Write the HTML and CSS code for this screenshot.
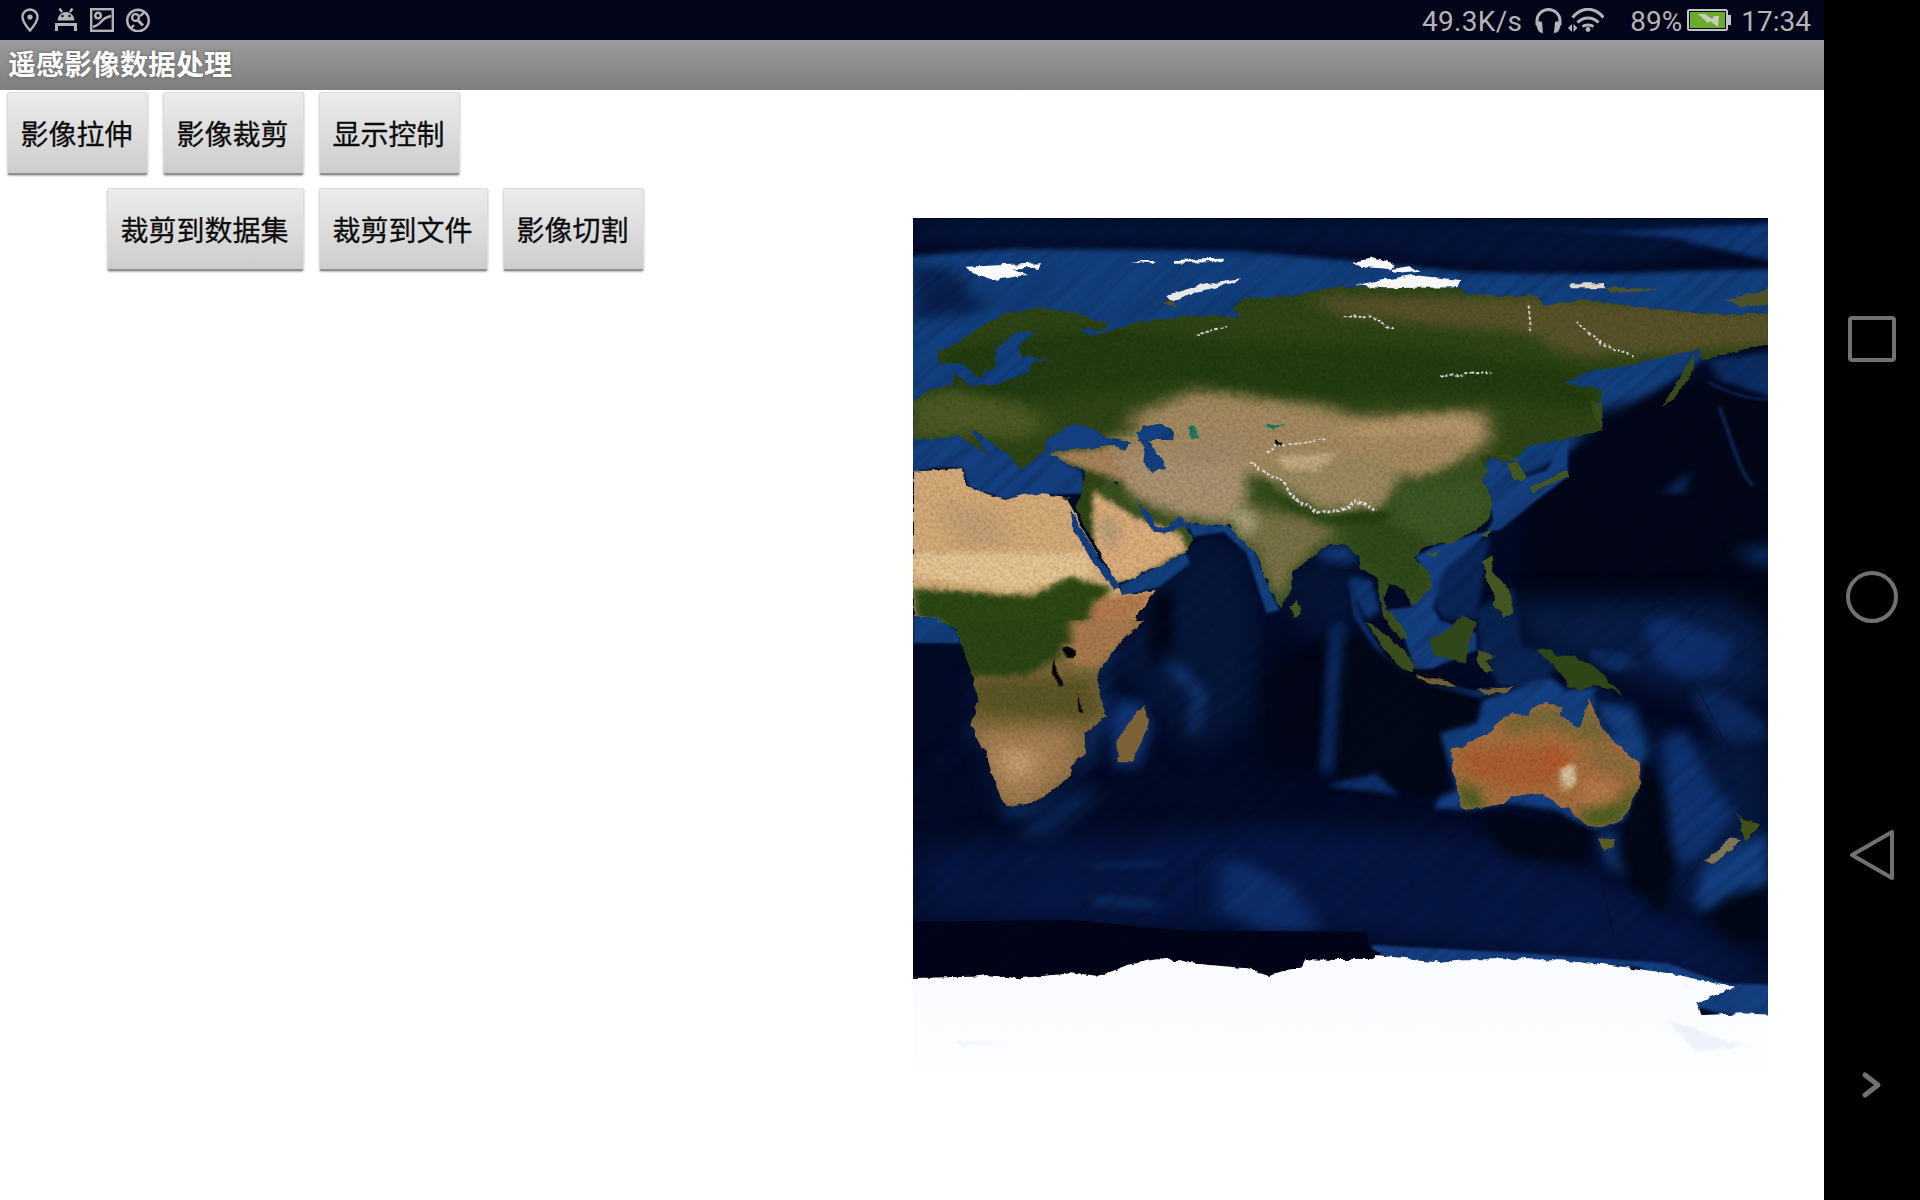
FILE: index.html
```html
<!DOCTYPE html>
<html lang="zh">
<head>
<meta charset="utf-8">
<title>遥感影像数据处理</title>
<link rel="stylesheet" href="styles.css">
</head>
<body>
<div class="screen">
  <div class="main">
    <header class="status">
      <div class="status-left">
        <svg class="ic" viewBox="0 0 24 24"><path class="ln" d="M12 1.500a7.500 7.500 0 0 0-7.500 7.500c0 5 7.500 13.500 7.500 13.500s7.500-8.500 7.500-13.500a7.500 7.500 0 0 0-7.500-7.500z"/><circle class="fl" cx="12" cy="9" r="2.600"/></svg>
        <svg class="ic" viewBox="0 0 24 24"><path class="fl" d="M3.500 12.500a8.500 8.500 0 0 1 17 0z"/><path class="ln" d="M5.500 0.500l2.500 3.500M18.500 0.500l-2.500 3.500"/><circle class="dk" cx="8.500" cy="8" r="1.200"/><circle class="dk" cx="15.500" cy="8" r="1.200"/><path class="fl" d="M1 15h22v8h-3v-5h-16v5h-3z"/></svg>
        <svg class="ic" viewBox="0 0 24 24"><rect class="ln" x="1.200" y="1.200" width="21.600" height="21.600"/><circle class="ln" cx="8" cy="7.500" r="2.800"/><path class="ln" d="M3 19c3-1 5-2 7-4 3-4 6-6 11-7"/></svg>
        <svg class="ic" viewBox="0 0 24 24"><circle class="ln" cx="12" cy="12.500" r="10.800"/><circle class="ln" cx="9.500" cy="9.500" r="3.400"/><path class="ln ln3" d="M12 12.500l5 5"/><path class="ln" d="M5 20l3-3M14 8l5-4"/></svg>
      </div>
      <div class="status-right">
        <span class="st speed">49.3K/s</span>
        <svg class="hp" viewBox="0 0 27 25"><path class="ln ln3" d="M2 17V12.500a11.500 11 0 0 1 23 0v4.500"/><path class="fl" d="M1 15q3-3 6-1l1 11q-6 0-7-10zM26 15q-3-3-6-1l-1 11q6 0 7-10z"/></svg>
        <svg class="wf" viewBox="0 0 36 24"><path class="ln ln3" d="M4.500 9.500c9-11 22-11 31 0M9.500 14.500c6-6 15-6 21 0M14.500 18.500c3-2 8-2 11 0"/><circle class="fl" cx="20" cy="21.500" r="2.400"/><path class="fl" d="M4 16v8l-4-4zM5.500 16v8l4-4z"/></svg>
        <span class="st pct">89%</span>
        <svg class="bt" viewBox="0 0 44 22"><rect class="bt-o" x="1" y="1" width="39" height="20" rx="1.500"/><rect class="bt-f" x="3" y="3" width="35" height="16"/><path class="bt-b" d="M11 5h7l7 5 2-3h5l-1 11-8-6-2 2z"/><rect class="bt-n" x="41" y="6" width="3" height="10"/></svg>
        <span class="st time">17:34</span>
      </div>
    </header>
    <div class="titlebar">遥感影像数据处理</div>
    <div class="content">
      <div class="buttons">
        <div class="row">
          <button class="btn">影像拉伸</button>
          <button class="btn">影像裁剪</button>
          <button class="btn">显示控制</button>
        </div>
        <div class="row row-sub">
          <button class="btn btn-six">裁剪到数据集</button>
          <button class="btn btn-five">裁剪到文件</button>
          <button class="btn">影像切割</button>
        </div>
      </div>
      <svg class="map" viewBox="913 218 855 855">
        <defs>
          <filter id="b3" x="-10%" y="-10%" width="120%" height="120%"><feGaussianBlur stdDeviation="3"/></filter>
          <filter id="b8" x="-20%" y="-20%" width="140%" height="140%"><feGaussianBlur stdDeviation="8"/></filter>
          <filter id="b16" x="-30%" y="-30%" width="160%" height="160%"><feGaussianBlur stdDeviation="18"/></filter>
          <filter id="b30" x="-40%" y="-40%" width="180%" height="180%"><feGaussianBlur stdDeviation="36"/></filter>
          <filter id="noise" x="0" y="0" width="100%" height="100%"><feTurbulence type="fractalNoise" baseFrequency="0.3" numOctaves="2" seed="7"/><feColorMatrix values="0 0 0 0 0  0 0 0 0 0  0 0 0 0 0  1.800 0 0 0 -0.650"/></filter>
          <filter id="streak" x="0" y="0" width="100%" height="100%"><feTurbulence type="fractalNoise" baseFrequency="0.008 0.14" numOctaves="3" seed="11"/><feColorMatrix values="0 0 0 0 0  0 0 0 0 0  0 0 0 0 0  2.200 0 0 0 -0.850"/></filter>
          <filter id="rough" x="-2%" y="-2%" width="104%" height="104%"><feTurbulence type="fractalNoise" baseFrequency="0.09" numOctaves="3" seed="3" result="t"/><feDisplacementMap in="SourceGraphic" in2="t" scale="6" xChannelSelector="R" yChannelSelector="G"/></filter>
          <linearGradient id="ice" x1="0" y1="0" x2="0" y2="1"><stop offset="0" stop-color="#f9fbfe"/><stop offset="0.7" stop-color="#fcfdff"/><stop offset="1" stop-color="#ffffff"/></linearGradient>
          <clipPath id="clipEA"><use href="#eurasia"/><use href="#southasia"/><use href="#africaN"/></clipPath>
          <clipPath id="clipLand"><use href="#eurasia"/><use href="#southasia"/><use href="#africaN"/><use href="#africaS"/><use href="#australia"/></clipPath>
          <clipPath id="clipAf"><use href="#africaS"/></clipPath>
          <clipPath id="clipAu"><use href="#australia"/></clipPath>
          <clipPath id="frame"><rect x="913" y="218" width="855" height="855"/></clipPath>
          <path id="eurasia" transform="translate(900 200) scale(0.5688 0.3333)" d="M23 600L50 570 95 555 95 520 125 560 170 555 225 515 230 490 270 478 215 470 205 440 240 395 205 395 170 450 165 500 140 535 110 490 70 490 65 455 100 430 150 370 190 340 250 322 320 345 365 375 355 392 310 385 340 408 385 385 420 365 520 345 570 350 600 355 585 320 610 290 640 295 700 285 760 262 900 260 985 265 1000 285 1120 290 1130 315 1200 300 1300 320 1400 340 1547 345 1547 430 1480 450 1410 480 1405 450 1340 470 1300 490 1200 520 1170 550 1235 570 1230 600 1220 640 1235 690 1170 720 1110 735 1080 780 1060 790 1040 770 1030 800 950 900 750 950 500 950 400 1000 388 1150 345 1040 310 930 325 815 260 760 320 745 370 735 420 760 435 800 470 815 490 800 475 760 480 700 460 670 425 680 415 730 370 715 340 690 300 672 260 720 250 760 210 810 190 760 130 690 125 700 160 770 100 705 60 720 23 710z"/>
          <path id="southasia" transform="translate(1100 420) scale(0.3333)" d="M1250 130L1225 105 1165 100 1135 120 1170 155 1145 180 1180 235 1165 300 1130 330 1060 365 1000 375 965 385 945 410 985 460 995 500 935 555 915 510 870 490 850 530 860 570 915 650 905 660 850 590 830 470 780 450 775 410 745 375 680 375 630 415 580 455 570 520 540 560 510 510 480 430 465 390 415 355 385 315 320 315 260 310 240 295 280 360 255 395 200 430 120 465 55 495 25 440 0 395 0 200 100 60 600 60 1100 60z"/>
          <path id="africaN" transform="translate(900 200) scale(0.5688 0.3333)" d="M23 815L105 805 120 860 185 900 230 880 290 890 305 935 345 1060 385 1160 390 1185 450 1170 410 1260 385 1330 105 1330 105 1290 70 1250 23 1245z"/>
          <path id="africaS" transform="translate(900 620) scale(0.5688 0.3333)" d="M65 0L100 30 110 90 125 150 138 240 125 320 150 400 180 550 190 562 240 545 300 470 300 440 325 400 325 340 362 290 345 170 375 90 430 0z"/>
          <path id="australia" transform="translate(1300 600) scale(0.3333)" d="M455 450L520 425 575 395 585 375 630 340 680 345 700 320 740 305 785 320 775 345 820 375 840 390 855 340 865 295 885 330 905 385 950 430 1015 490 1022 545 1000 590 970 660 905 685 870 680 825 650 810 620 780 625 750 590 700 580 640 590 590 615 530 625 490 630 480 605 470 550 455 490z"/>
        </defs>
        <g clip-path="url(#frame)">
          <rect x="913" y="218" width="855" height="855" fill="#030a26"/>

          <!-- northern ocean -->
          <g transform="translate(900 200) scale(0.5688 0.3333)">
            <path filter="url(#b8)" fill="#123f7e" d="M0 170L200 145 600 150 1000 215 1250 220 1560 205 1560 400 1420 470 1290 620 1240 700 1130 800 1060 860 900 800 300 800 0 800z"/>
            <path filter="url(#b16)" fill="#041338" d="M23 54H1547V100L1300 190 1100 210 800 160 400 130 23 130z"/>
            <path filter="url(#b8)" fill="#0f3877" d="M1000 75L1250 95 1547 70 1547 190 1350 110z"/>
            <path filter="url(#b16)" fill="#08204e" d="M23 200L90 200 150 330 30 360 23 360z"/>
            <path filter="url(#b16)" fill="#020618" d="M1220 640L1420 540 1560 600 1560 1330 1070 1330 1100 900 1170 800z"/>
            <path filter="url(#b8)" fill="#0c2e66" d="M1420 480L1547 450 1547 600 1440 540z"/>
            <path filter="url(#b3)" fill="none" stroke="#0e2c5e" stroke-width="6" d="M1420 545C1470 590 1500 600 1547 600M1440 620C1460 700 1470 800 1500 860"/>
            <path filter="url(#b16)" fill="#0a2656" d="M1470 1050L1547 1020 1547 1110 1490 1090z"/>
            <path filter="url(#b8)" fill="#0a2656" d="M1340 880L1390 810 1380 880z"/>
            <path filter="url(#b3)" fill="#143f80" d="M130 690L190 760 250 770 320 810 325 880 260 885 190 900 120 860 110 800 60 800 23 820 23 740 70 700z"/>
            <path filter="url(#b3)" fill="#12407f" d="M23 1245L75 1250 105 1300 105 1330 23 1330z"/>
          </g>

          <!-- southern and western ocean -->
          <g transform="translate(900 620) scale(0.5688 0.3333)">
            <path filter="url(#b30)" fill="#07194a" opacity="0.8" d="M23 680L650 620 1000 640 1250 760 1400 900 1547 1090 1547 1130 1100 1010 800 950 23 900z"/>
            <path filter="url(#b16)" fill="#0e2f6c" d="M560 730L600 720 690 800 740 930 640 930 560 870z"/>
            <path filter="url(#b8)" fill="#0a2656" d="M340 820L460 840 450 870 340 860z M340 730L460 720 460 740 340 745z"/>
            <path filter="url(#b16)" fill="#081f4a" d="M30 520L110 350 130 330 70 420 40 520z"/>
            <path filter="url(#b16)" fill="#10346e" d="M120 150L140 240 125 330 150 420 185 590 240 590 330 430 370 290 360 170 390 90 350 90 330 300 300 470 230 560 190 560 150 400z"/>
            <path filter="url(#b16)" fill="#0a2656" d="M205 640L280 550 340 480 330 560 250 660z"/>
            <path filter="url(#b3)" fill="#143f80" d="M830 975L1100 1000 1350 1030 1450 1090 1547 1095 1547 1195 1440 1180 1400 1160 1300 1040 1100 1030 830 1030z"/>
          </g>

          <!-- Indian Ocean and South East Asia -->
          <g transform="translate(1100 420) scale(0.3333)">
            <path filter="url(#b30)" fill="#06173a" d="M170 520L280 340 430 380 480 620 470 880 300 1000 150 850 20 700z"/>
            <path filter="url(#b16)" fill="#020618" d="M160 520L220 510 220 680 140 740z"/>
            <path filter="url(#b30)" fill="#020618" d="M490 720L700 640 820 720 950 800 1150 830 1120 920 1040 1050 480 1050z"/>
            <path filter="url(#b30)" fill="#061538" d="M560 420L760 420 780 600 700 640 560 620z"/>
            <path filter="url(#b16)" fill="#11336e" d="M190 740L240 730 320 820 300 920 260 950 280 830z"/>
            <path filter="url(#b16)" fill="#0f3070" d="M700 620L735 620 710 900 695 1050 665 1050 685 880z"/>
            <path filter="url(#b16)" fill="#133f80" d="M640 400L680 375 745 375 780 410 750 430 680 420z"/>
            <path filter="url(#b3)" fill="#133f80" d="M260 310L385 315 465 390 510 510 540 570 500 580 440 400 370 335 280 350z"/>
            <path filter="url(#b3)" fill="#12407e" d="M60 495L255 395 270 430 180 500 60 530z"/>
            <path filter="url(#b3)" fill="#133f80" d="M120 255L160 290 190 330 240 295 275 320 240 340 160 340z"/>
            <path filter="url(#b16)" fill="#0e3272" d="M30 880L60 830 130 850 160 920 120 1040 40 1040z"/>
            <path filter="url(#b3)" fill="#143f80" d="M1130 110L1180 100 1250 130 1280 170 1340 150 1404 40 1404 170 1310 240 1200 330 1130 340 1000 380 945 410 985 470 935 560 860 570 915 660 945 750 1000 745 1130 690 1130 640 1020 600 1000 560 1070 450 1150 350 1180 300z"/>
            <path filter="url(#b8)" fill="#0a2658" d="M1000 560L1030 450 1140 360 1170 345 1130 600 1040 600z"/>
            <path filter="url(#b8)" fill="#0f3470" d="M745 480L770 470 815 480 840 570 800 600 755 520z"/>
            <path filter="url(#b3)" fill="#0d2c62" d="M745 480L790 600 860 710 945 770 1120 810 1200 800 1140 835 950 795 830 695 760 590z"/>
            <path filter="url(#b8)" fill="#0a2452" d="M1130 570L1240 500 1270 680 1404 700 1320 800 1200 800 1140 700z"/>
          </g>
          <g transform="translate(1300 600) scale(0.3333)">
            <path filter="url(#b30)" fill="#081c45" d="M620 0L1300 0 1404 100 1404 300 1200 300 900 200 700 150z"/>
            <path filter="url(#b16)" fill="#0e2e6a" d="M1030 70L1100 50 1300 120 1280 210 1170 240 1070 190z"/>
            <path filter="url(#b16)" fill="#0c2a5e" d="M1180 270L1260 270 1404 370 1404 420 1290 450 1200 340z"/>
            <path filter="url(#b8)" fill="#0c2a5e" d="M870 150L950 150 1020 190 960 220 880 190z"/>
            <path filter="url(#b30)" fill="#071a42" d="M880 400L1404 440 1404 900 1100 900 960 560z"/>
            <path filter="url(#b16)" fill="#020817" d="M960 470L1050 480 1160 700 1090 950 930 800 970 700z"/>
            <path filter="url(#b16)" fill="#020817" d="M1200 930L1404 850 1404 1020 1300 1030z"/>
            <path filter="url(#b16)" fill="#020817" d="M530 650L880 650 860 800 620 770z"/>
            <path filter="url(#b16)" fill="#020817" d="M100 90L520 300 540 370 420 470 440 600 320 570 110 550z"/>
            <path filter="url(#b8)" fill="#0e2f68" d="M90 560L270 580 300 590 230 520 100 550z"/>
            <path filter="url(#b16)" fill="#0f3270" d="M95 90L130 60 90 530 75 520z"/>
            <path filter="url(#b16)" fill="#0f3372" d="M1090 420L1150 390 1230 540 1310 640 1200 770 1130 790 1110 700 1100 560z"/>
            <path filter="url(#b16)" fill="#133f80" d="M1180 920L1210 800 1300 740 1404 700 1404 850 1290 880 1220 930z"/>
            <path filter="url(#b8)" fill="#133f80" d="M550 300L750 230 800 270 880 260 950 290 885 270 885 340 920 400 1030 430 1020 540 975 660 890 690 820 660 770 630 620 610 520 630 400 625 420 590 470 570 440 470 420 400 530 370z"/>
            <path filter="url(#b16)" fill="#133f80" d="M885 300L1000 320 1030 400 1040 470 1020 490 950 420 900 360z"/>
            <path filter="url(#b16)" fill="#103570" d="M890 690L950 690 950 760 985 830 920 800z"/>
            <path fill="none" stroke="#030c28" stroke-width="3" opacity="0.7" d="M900 830L940 1000M1085 960C1110 900 1160 850 1200 780M1180 250C1220 300 1270 440 1300 455"/>
          </g>
          <g transform="translate(900 620) scale(0.5688 0.3333)">
            <path fill="#020519" d="M23 905L300 900 500 932 820 935 826 985 846 1000 830 1025 650 1070 400 1050 345 1075 23 1080z"/>
          </g>

          <g transform="rotate(-40 1340 645)"><rect x="700" y="0" width="1300" height="1300" filter="url(#streak)" opacity="0.16"/></g>

          <!-- land -->
          <g filter="url(#rough)">
            <use href="#eurasia" fill="#2e4515"/>
            <use href="#southasia" fill="#3a5020"/>
            <use href="#africaN" fill="#d5ac79"/>
            <use href="#africaS" fill="#7f6a3a"/>
            <use href="#australia" fill="#a66e3e"/>

            <g clip-path="url(#clipEA)">
              <g transform="translate(900 200) scale(0.5688 0.3333)">
                <path filter="url(#b16)" fill="#59532a" d="M720 290L1120 290 1547 340 1547 430 1340 460 1180 470 1100 400 900 370 760 340z"/>
                <path filter="url(#b16)" fill="#233c10" d="M70 450L360 380 600 430 900 440 1200 510 1240 640 1050 590 750 590 500 540 230 600 100 600z"/>
                <path filter="url(#b16)" fill="#4d5a25" d="M23 600L100 570 230 620 260 690 200 720 100 700 23 720z"/>
                <path filter="url(#b16)" fill="#a48a60" d="M400 650L520 570 750 620 800 650 1030 630 1040 720 960 800 880 830 640 830 560 800 430 800 330 740 420 690z"/>
                <path filter="url(#b16)" fill="#bb9c70" d="M760 690L1000 650 1020 700 940 780 880 770 820 730z"/>
                <path filter="url(#b8)" fill="#a8835a" d="M255 760L400 740 440 800 470 890 420 880 400 850 330 810z"/>
                <path filter="url(#b16)" fill="#c4a076" d="M60 900L170 930 200 1040 100 1040z"/>
                <path filter="url(#b8)" fill="#e4c594" d="M23 1060L330 1060 340 1130 200 1170 23 1130z"/>
                <path filter="url(#b8)" fill="#2c4813" d="M23 1165L230 1190 300 1130 370 1160 330 1340 23 1340z"/>
                <path filter="url(#b8)" fill="#b47b4f" d="M340 1200L450 1170 390 1330 320 1330z"/>
              </g>
              <g transform="translate(1100 420) scale(0.3333)">
                <path filter="url(#b16)" fill="#ab9270" d="M40 100L440 100 440 250 380 310 240 290 100 230z"/>
                <path filter="url(#b16)" fill="#9c8960" d="M460 130L860 110 900 190 830 270 660 270 510 180z"/>
                <path filter="url(#b8)" fill="#c2a980" d="M530 110L720 95 650 150 550 150z"/>
                <path filter="url(#b16)" fill="#a58a60" d="M720 60L1100 30 1050 110 950 170 860 120 740 100z"/>
                <path filter="url(#b16)" fill="#a08a68" d="M200 60L450 50 440 120 240 130z"/>
                <path filter="url(#b8)" fill="#26400f" d="M480 180L540 230 620 270 700 295 800 270 880 280 840 320 700 310 600 290 500 210z"/>
                <path filter="url(#b16)" fill="#7a7246" d="M420 260L600 290 720 340 660 370 580 450 540 540 500 480 470 390 410 350z"/>
                <path filter="url(#b16)" fill="#a8a078" d="M380 270L450 260 480 320 420 350z"/>
                <path filter="url(#b16)" fill="#2f4a18" d="M740 330L880 300 1000 360 970 390 950 410 990 480 930 550 880 480 850 530 820 440 760 400z"/>
                <path filter="url(#b16)" fill="#3c5824" d="M900 200L1140 180 1170 290 1000 370 880 300z"/>
                <path filter="url(#b8)" fill="#dcae7c" d="M-20 210L100 290 240 340 260 390 100 480 50 490 -20 395z"/>
                <path filter="url(#b16)" fill="#b39a78" d="M-10 290L50 300 60 360 20 390z"/>
              </g>
            </g>
            <g clip-path="url(#clipAf)">
              <g transform="translate(900 620) scale(0.5688 0.3333)">
                <path filter="url(#b8)" fill="#2b4613" d="M60 0L310 0 280 110 220 170 120 170z"/>
                <path filter="url(#b8)" fill="#a97a50" d="M300 0L430 0 350 140 300 140z"/>
                <path filter="url(#b16)" fill="#5c5626" d="M120 180L340 170 360 300 120 280z"/>
                <path filter="url(#b16)" fill="#a77f55" d="M130 330L300 330 310 440 220 560 170 540z"/>
                <path filter="url(#b16)" fill="#caa074" d="M170 390L240 390 230 470 190 480z"/>
                <path fill="#030503" d="M290 80L310 88 305 118 292 112zM270 120L285 200 278 200 265 140zM312 215L322 280 314 275z"/>
              </g>
            </g>
            <g clip-path="url(#clipAu)">
              <g transform="translate(1300 600) scale(0.3333)">
                <path filter="url(#b16)" fill="#7a6a38" d="M600 350L780 310 900 340 950 430 850 420 760 380 620 400z"/>
                <path filter="url(#b16)" fill="#ab5f30" d="M470 450L780 440 760 560 620 560 500 520z"/>
                <path filter="url(#b16)" fill="#b4562a" d="M740 460L810 460 800 510 750 520z"/>
                <path filter="url(#b8)" fill="#d9c29c" d="M780 510L820 490 830 550 790 570z"/>
                <path filter="url(#b16)" fill="#8a6d3e" d="M860 420L1015 490 1000 540 880 500z"/>
                <path filter="url(#b16)" fill="#b67a4d" d="M850 540L950 540 920 620 840 610z"/>
                <path filter="url(#b16)" fill="#4e6022" d="M470 540L540 570 560 620 490 640z"/>
                <path filter="url(#b16)" fill="#4a5e20" d="M820 640L960 610 1020 530 1020 570 970 670 880 690z"/>
              </g>
            </g>
            <g transform="translate(1300 600) scale(0.3333)">
              <path fill="#5a5a28" d="M893 712L945 715 940 745 910 752z"/>
              <path fill="#7c7452" d="M1212 785L1250 750 1290 715 1320 720 1290 755 1240 795z"/>
              <path fill="#3f5018" d="M1305 630L1330 660 1380 672 1350 710 1335 720 1320 690 1330 670z"/>
              <path fill="#2e4616" d="M705 150L745 145 770 170 820 165 880 200 920 235 970 285 930 265 880 255 845 270 800 260 795 240 760 195 735 175z"/>
              <path fill="#30471a" d="M390 118L440 90 490 45 530 65 515 120 495 190 450 180 400 160z"/>
              <path fill="#3a4c1c" d="M195 65L250 95 310 150 345 200 340 220 300 200 240 130z"/>
              <path fill="#3c4e1c" d="M240 0L270 40 310 85 320 120 280 95 250 40z"/>
              <path fill="#6c6030" d="M345 225L400 235 450 245 470 258 420 255 350 238zM530 270L620 262 600 280 560 280zM590 275L650 255 600 285z"/>
              <path fill="#445420" d="M535 150L585 170 560 180 580 215 550 220 535 190zM590 0L640 0 630 50 580 20z"/>
            </g>
            <g transform="translate(1100 420) scale(0.3333)">
              <path fill="#7b6135" d="M50 960L110 880 130 855 150 900 115 990 95 1030 60 1030z"/>
              <path fill="#43561f" d="M985 400L1015 395 1005 415zM1150 350L1170 320 1165 355zM572 560L590 540 605 575 585 592zM1290 200L1340 180 1404 150 1404 170 1330 200 1300 225zM1150 420L1175 410 1180 460 1230 510 1240 580 1210 590 1160 480zM1250 130L1280 170 1270 180 1240 180 1225 130z"/>
              <path fill="#143f80" d="M105 40L160 15 190 10 150 60 190 130 200 150 160 155 130 130 135 85zM115 250L150 285 170 322 200 322 240 292 265 310 195 340 165 335 140 310z"/>
              <path fill="#1e7a5a" d="M265 25L285 15 295 55 275 55zM485 20L560 12 510 28z"/>
              <path fill="#030503" d="M525 62L550 65 545 78 525 75zM40 185L52 185 50 195z"/>
              <path class="snow snow-thick" d="M450 125L490 150 540 180 590 240 650 275 720 275 770 240 830 270"/>
              <path class="snow" d="M500 100L530 75 600 70 680 60"/>
            </g>
            <!-- seas, ice and islands -->
            <g transform="translate(900 200) scale(0.5688 0.3333)">
              <path fill="#143f80" d="M260 725L300 672 340 690 370 730 340 745 270 750zM300 930L345 1060 388 1155 378 1170 340 1090 305 990z"/>
              <path fill="#313f14" d="M300 885L295 905 285 895z"/>
              <path fill="#fbfbfb" d="M115 200L250 190 245 203 200 205 225 225 165 240 120 215zM405 183L450 183 440 190zM480 180L570 176 565 186 480 188z"/>
              <path fill="#f7f7f7" d="M795 185L835 175 870 195 865 208 810 200zM865 210L900 200 915 215 870 222zM800 255L900 225 985 240 980 262 850 265z"/>
              <path fill="#e8e8e8" d="M470 285L530 255 600 238 590 250 520 275 480 305z"/>
              <path fill="#ded9c6" d="M1175 250L1235 250 1240 265 1180 265z"/>
              <path fill="#4d5129" d="M455 310L480 300 490 325zM1240 260L1340 270 1250 280zM1450 300L1547 260 1547 310 1480 320z"/>
              <path fill="#364a1a" d="M1340 620L1385 490 1400 460 1395 510 1360 600zM1215 600L1235 610 1235 690 1222 650z"/>
              <path class="snow" d="M780 345L830 350 870 390M1190 365L1230 430 1290 470M950 530L1040 515M520 405L575 378M1105 320L1110 395"/>
            </g>
          </g>

          <g clip-path="url(#clipLand)"><rect x="913" y="218" width="855" height="855" filter="url(#noise)" opacity="0.16"/></g>

          <g filter="url(#rough)">
            <g transform="translate(900 620) scale(0.5688 0.3333)">
              <path fill="url(#ice)" d="M0 1075L130 1070 150 1065 210 1075 300 1060 345 1070 400 1035 450 1018 490 1020 510 1030 610 1045 650 1068 710 1040 715 1018 770 1020 830 1020 835 1005 950 1025 990 1018 1160 1018 1250 1035 1350 1060 1470 1100 1400 1150 1410 1185 1480 1180 1600 1190 1600 1420 0 1420z"/>
              <path filter="url(#b3)" fill="#e7eef8" opacity="0.7" d="M1350 1200L1490 1280 1400 1295zM100 1265L200 1272 100 1275zM1378 1095L1392 1100 1382 1106z"/>
            </g>
          </g>
        </g>
      </svg>
    </div>
  </div>
  <nav class="nav">
    <svg class="nav-ic" viewBox="0 0 96 1200">
      <rect x="26" y="318" width="44" height="42" rx="2" class="nv"/>
      <circle cx="48" cy="597" r="24" class="nv"/>
      <path d="M28 855L68 832V878z" class="nv"/>
      <path d="M41 1075L54 1085 41 1095" class="nv nv-thick"/>
    </svg>
  </nav>
</div>
</body>
</html>
```

FILE: styles.css
```css
html, body {
  margin: 0;
  padding: 0;
  background: #000;
}
.screen {
  display: flex;
  width: 1920px;
  height: 1200px;
  overflow: hidden;
}
.main {
  display: flex;
  flex-direction: column;
  width: 1824px;
  background: #fff;
}
.status {
  display: flex;
  align-items: center;
  justify-content: space-between;
  height: 40px;
  background: #020419;
  flex: none;
}
.status-left {
  display: flex;
  gap: 12px;
  padding-left: 18px;
}
.status-right {
  display: flex;
  align-items: center;
  padding-right: 13px;
}
.ic { width: 24px; height: 24px; }
.ln { fill: none; stroke: #b4b4b6; stroke-width: 2.400; }
.ln3 { stroke-width: 3; }
.fl { fill: #b4b4b6; }
.dk { fill: #020419; }
.st {
  font-family: Roboto, sans-serif;
  font-size: 28px;
  line-height: 40px;
  color: #b4b4b6;
  padding-top: 3px;
}
.speed { letter-spacing: 0.300px; }
.hp { width: 27px; height: 25px; margin-left: 13px; }
.wf { width: 36px; height: 24px; margin-left: 6px; }
.pct { margin-left: 26px; }
.bt { width: 44px; height: 22px; margin-left: 5px; }
.bt-o { fill: none; stroke: #c4c4c4; stroke-width: 2; }
.bt-f { fill: #6aab2c; }
.bt-b { fill: #c9cdbf; }
.bt-n { fill: #c4c4c4; }
.time { margin-left: 10px; }
.titlebar {
  flex: none;
  height: 50px;
  padding-left: 8px;
  background: linear-gradient(#9b9b9b, #7e7e7e);
  font-family: "Noto Sans CJK SC", sans-serif;
  font-weight: 700;
  font-size: 28px;
  line-height: 46px;
  color: #fff;
  text-shadow: 0 0 3px #555;
}
.content {
  flex: 1;
  display: flex;
  justify-content: space-between;
  align-items: flex-start;
}
.buttons {
  display: flex;
  flex-direction: column;
  gap: 13px;
  padding: 2px 0 0 7px;
}
.row {
  display: flex;
  gap: 15px;
}
.row-sub { margin-left: 100px; }
.btn {
  width: 141px;
  height: 83px;
  padding: 0 2px 0 0;
  border: 1px solid #dcdcdc;
  border-bottom: 2px solid #8f8f8f;
  border-radius: 3px;
  background: linear-gradient(#ececec, #cdcdcd);
  box-shadow: 0 1px 2px rgba(0, 0, 0, 0.3);
  font-family: "Noto Sans CJK SC", sans-serif;
  font-size: 28px;
  color: #0c0c0c;
  -webkit-text-stroke: 0.300px #0c0c0c;
}
.btn-six { width: 197px; }
.btn-five { width: 169px; }
.map {
  width: 855px;
  height: 855px;
  margin: 128px 56px 0 0;
  flex: none;
  color-interpolation-filters: sRGB;
}
.nav {
  width: 96px;
  height: 1200px;
  background: #000;
}
.nav-ic { display: block; width: 96px; height: 1200px; }
.nv {
  fill: none;
  stroke: #717171;
  stroke-width: 4;
  stroke-linejoin: round;
}
.nv-thick { stroke-width: 5; stroke-linecap: round; }
.snow {
  fill: none;
  stroke: #dcdcd8;
  stroke-width: 2;
  stroke-dasharray: 3 2;
  vector-effect: non-scaling-stroke;
}
.snow-thick { stroke-width: 3; }
```
